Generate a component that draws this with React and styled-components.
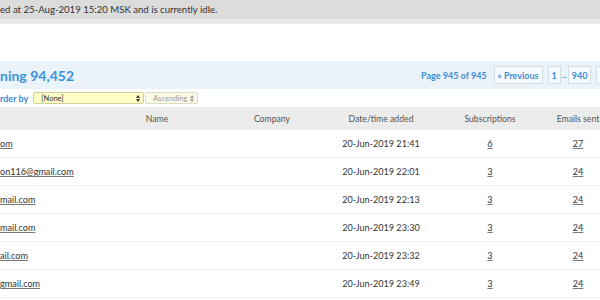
import React from "react";
import styled, { createGlobalStyle } from "styled-components";

const Global = createGlobalStyle`
  html, body { margin: 0; padding: 0; background: #fff; }
  body { font-family: Lato, "Open Sans", "Liberation Sans", sans-serif; color: #333; }
  #root { width: 600px; height: 300px; overflow: hidden; }
`;

const Page = styled.div`
  width: 600px;
  display: flex;
  flex-direction: column;
`;

const StatusBar = styled.div`
  height: 19px;
  background: #dcdcdc;
  font-size: 9.6px;
  line-height: 19px;
  color: #333;
  white-space: nowrap;
  border-bottom: 5px solid #ebebeb;
`;

const Spacer = styled.div`
  height: ${p => p.$h}px;
`;

const TitleBand = styled.div`
  height: 28px;
  background: #eaf2fa;
  display: flex;
  align-items: center;
  white-space: nowrap;
`;

const Heading = styled.h2`
  margin: 0;
  font-size: 14px;
  font-weight: 700;
  color: #3b93dc;
`;

const Pager = styled.div`
  margin-left: auto;
  margin-right: -59px;
  display: flex;
  align-items: center;
  gap: 5px;
  font-size: 9px;
  font-weight: 700;
  color: #3b8ed6;
`;

const PageLabel = styled.span`
  margin-right: 2px;
`;

const PageButton = styled.span`
  display: inline-flex;
  align-items: center;
  height: 16px;
  padding: 0 3px;
  border: 1px solid #d5dde5;
  background: #f7fafd;
  color: ${p => (p.$muted ? "#9ab" : "#3b8ed6")};
  font-size: 9px;
  font-weight: 700;
`;

const Ellipsis = styled.span`
  margin: 0 -4px;
  font-size: 7px;
`;

const OrderRow = styled.div`
  height: 18px;
  display: flex;
  align-items: center;
  gap: 5px;
  white-space: nowrap;
`;

const OrderLabel = styled.span`
  font-size: 9px;
  font-weight: 700;
  color: #3b8ed6;
`;

const Select = styled.div`
  box-sizing: border-box;
  width: ${p => p.$w}px;
  height: 12px;
  margin-left: ${p => p.$ml || 0}px;
  display: flex;
  align-items: center;
  justify-content: space-between;
  padding: 0 3px 0 7px;
  border: 1px solid ${p => (p.$pale ? "#dcdcc0" : "#cfcf9c")};
  border-radius: 2px;
  background: ${p => (p.$pale ? "#fafae6" : "#ffffc6")};
  color: ${p => (p.$pale ? "#999" : "#333")};
  font-size: 7.5px;
`;

const Arrows = () => (
  <svg width="4" height="7" viewBox="0 0 4 7">
    <path d="M2 0 L4 3 L0 3 Z M0 4 L4 4 L2 7 Z" fill="currentColor" />
  </svg>
);

const Grid = styled.div`
  display: grid;
  grid-template-columns: 100px 114px 116px 102px 116px 60px;
  align-items: center;
  height: ${p => p.$h}px;
  background: ${p => p.$bg || "transparent"};
  border-bottom: ${p => (p.$line ? "1px solid #efefef" : "none")};
  box-sizing: border-box;
  white-space: nowrap;
`;

const HeadCell = styled.div`
  text-align: center;
  font-size: 8.7px;
  color: #555;
`;

const Cell = styled.div`
  text-align: ${p => p.$align || "center"};
  font-size: 9.1px;
  color: #333;
`;

const Link = styled.a`
  color: #333;
  text-decoration: underline;
  text-decoration-color: #777;
`;

const rows = [
  { email: "om", date: "20-Jun-2019 21:41", subs: "6", sent: "27" },
  { email: "on116@gmail.com", date: "20-Jun-2019 22:01", subs: "3", sent: "24" },
  { email: "mail.com", date: "20-Jun-2019 22:13", subs: "3", sent: "24" },
  { email: "mail.com", date: "20-Jun-2019 23:30", subs: "3", sent: "24" },
  { email: "ail.com", date: "20-Jun-2019 23:32", subs: "3", sent: "24" },
  { email: "gmail.com", date: "20-Jun-2019 23:49", subs: "3", sent: "24" },
];

export default function App() {
  return (
    <Page>
      <Global />
      <StatusBar>ed at 25-Aug-2019 15:20 MSK and is currently idle.</StatusBar>
      <Spacer $h={37} />
      <TitleBand>
        <Heading>ning 94,452</Heading>
        <Pager>
          <PageLabel>Page 945 of 945</PageLabel>
          <PageButton>« Previous</PageButton>
          <PageButton>1</PageButton>
          <Ellipsis>...</Ellipsis>
          <PageButton>940</PageButton>
          <PageButton>945</PageButton>
          <PageButton $muted>Next »</PageButton>
        </Pager>
      </TitleBand>
      <OrderRow>
        <OrderLabel>rder by</OrderLabel>
        <Select $w={111}>
          <span>[None]</span>
          <Arrows />
        </Select>
        <Select $w={53} $pale $ml={-4}>
          <span>Ascending</span>
          <Arrows />
        </Select>
      </OrderRow>
      <Grid $h={23} $bg="#ececec">
        <HeadCell />
        <HeadCell>Name</HeadCell>
        <HeadCell>Company</HeadCell>
        <HeadCell>Date/time added</HeadCell>
        <HeadCell>Subscriptions</HeadCell>
        <HeadCell>Emails sent</HeadCell>
      </Grid>
      {rows.map((r, i) => (
        <Grid key={i} $h={28} $line>
          <Cell $align="left"><Link>{r.email}</Link></Cell>
          <Cell />
          <Cell />
          <Cell>{r.date}</Cell>
          <Cell><Link>{r.subs}</Link></Cell>
          <Cell><Link>{r.sent}</Link></Cell>
        </Grid>
      ))}
    </Page>
  );
}
